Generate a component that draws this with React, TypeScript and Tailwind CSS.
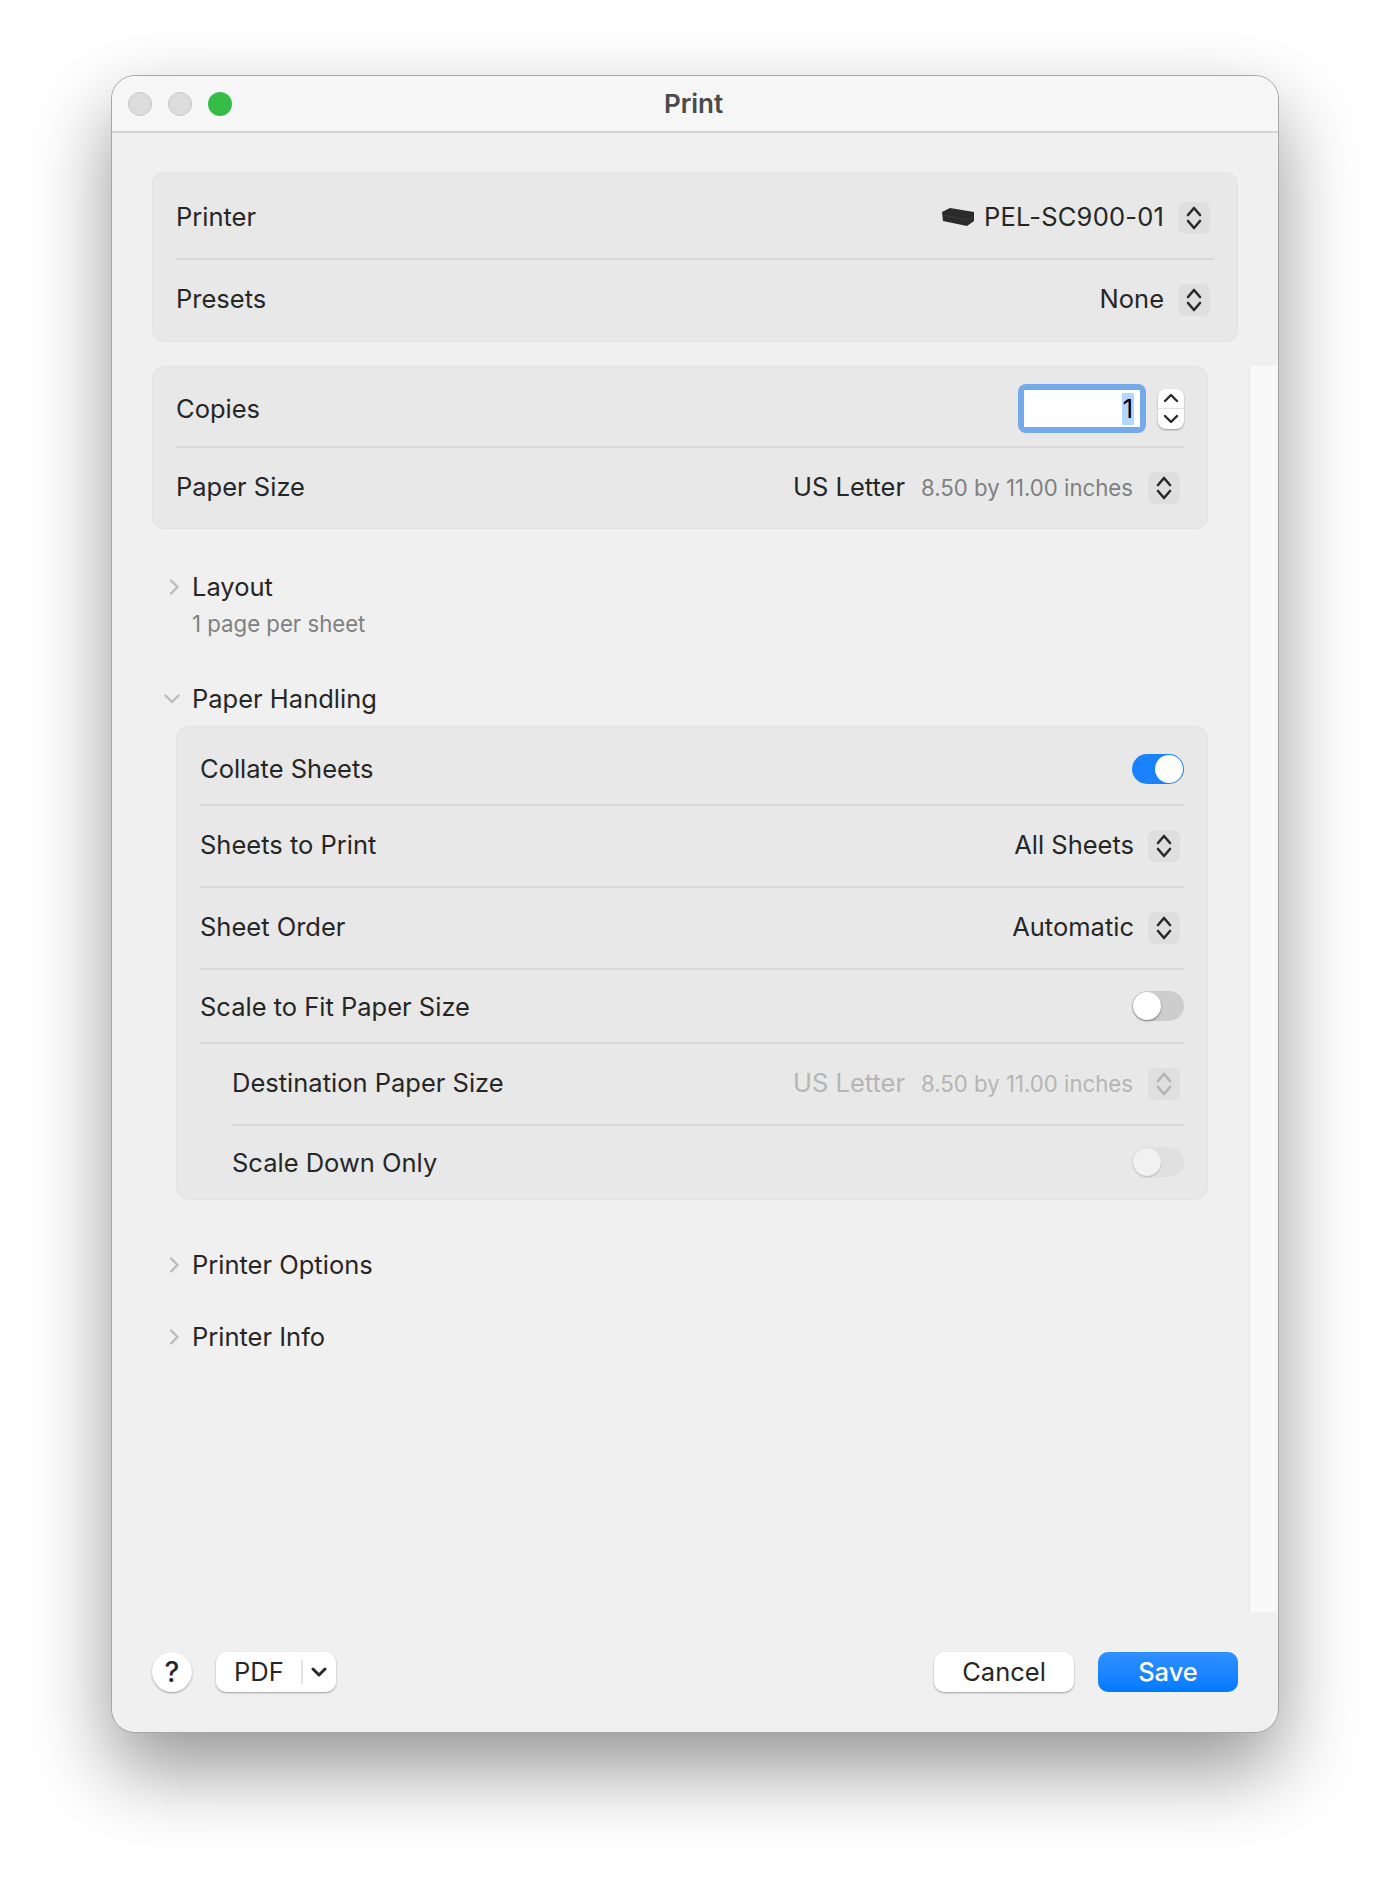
import React from 'react';

const Updown = ({ dim = false }: { dim?: boolean }) => (
  <div className="w-8 h-8 rounded-[7px] bg-[#dfdfdf] flex items-center justify-center">
    <svg width="16" height="24" viewBox="0 0 16 24" fill="none" stroke={dim ? '#b4b4b4' : '#2a2a2a'} strokeWidth="2.6" strokeLinecap="round" strokeLinejoin="round">
      <path d="M2 9 L8 2 L14 9" />
      <path d="M2 15 L8 22 L14 15" />
    </svg>
  </div>
);

const Toggle = ({ state }: { state: 'on' | 'off' | 'disabled' }) => {
  if (state === 'on') {
    return (
      <div className="w-[52px] h-[30px] rounded-full bg-[#1a82fb] flex items-center justify-end pr-[1px]">
        <div className="w-7 h-7 rounded-full bg-white" />
      </div>
    );
  }
  return (
    <div className={`w-[52px] h-[30px] rounded-full flex items-center pl-[1px] ${state === 'off' ? 'bg-[#cdcdcd]' : 'bg-[#e0e0e0]'}`}>
      <div className={`w-7 h-7 rounded-full ${state === 'off' ? 'bg-white shadow-[0_1px_2px_rgba(0,0,0,0.45)]' : 'bg-[#f1f1f1] shadow-[0_1px_2px_rgba(0,0,0,0.2)]'}`} />
    </div>
  );
};

const Divider = ({ inset = false }: { inset?: boolean }) => (
  <div className={`h-[2px] bg-[#d8d8d8] ${inset ? 'ml-[55px] mr-[23px]' : 'mx-[23px]'}`} />
);

const Row = ({ label, height, children, indent = false, labelPad = '' }: { label: string; height: string; children?: React.ReactNode; indent?: boolean; labelPad?: string }) => (
  <div className={`flex items-center justify-between ${height} ${indent ? 'pl-[55px]' : 'pl-[23px]'}`}>
    <span className={labelPad}>{label}</span>
    {children}
  </div>
);

const Section = ({ label }: { label: string }) => (
  <div className="flex items-center h-[32px] ml-[17px]">
    <div className="w-[23px]">
      <svg width="10" height="16" viewBox="0 0 10 16" fill="none" stroke="#bcbcbc" strokeWidth="2.4" strokeLinecap="round" strokeLinejoin="round">
        <path d="M2 1.5 L8.5 8 L2 14.5" />
      </svg>
    </div>
    <span>{label}</span>
  </div>
);

const Printer = () => (
  <svg width="34" height="19" viewBox="0 0 34 19" className="mr-[9px]">
    <path d="M1 4 L9 0 L33 4 L33 13 L26 18 L2 13 Z" fill="#2b2b2b" />
    <path d="M2 7 L26 12 L33 8" stroke="#3d3d3d" strokeWidth="1" fill="none" />
  </svg>
);

export default function App() {
  return (
    <div className="w-[1390px] h-[1880px] bg-white pl-[111px] pt-[75px] overflow-hidden text-[25.5px] leading-[32px] text-[#262626] font-['Inter',sans-serif]">
      <div className="w-[1168px] h-[1658px] rounded-[24px] border border-[#a6a6a6] bg-[#f0f0f0] flex flex-col overflow-hidden shadow-[0_36px_80px_rgba(0,0,0,0.42)]">
        {/* title bar */}
        <div className="relative h-[57px] shrink-0 bg-[#f6f6f6] border-b-2 border-[#d4d4d4] flex items-center justify-center pr-[3px]">
          <div className="absolute left-[16px] top-[16px] flex gap-4">
            <div className="w-6 h-6 rounded-full bg-[#dcdcdc] border border-[#c6c6c6]" />
            <div className="w-6 h-6 rounded-full bg-[#dcdcdc] border border-[#c6c6c6]" />
            <div className="w-6 h-6 rounded-full bg-[#35bd47]" />
          </div>
          <span className="font-semibold text-[26px] text-[#4b4b4b]">Print</span>
        </div>

        <div className="flex-1 flex flex-col pt-[39px]">
          {/* printer card */}
          <div className="ml-[40px] w-[1086px] h-[170px] rounded-[12px] bg-[#e8e8e8] border border-[#e2e2e2] shrink-0">
            <Row label="Printer" height="h-[85px] pt-[4px]" labelPad="pb-[2px]">
              <div className="flex items-center pr-[27px]">
                <Printer />
                <span className="pb-[2px] tracking-[0.2px]">PEL-SC900-01</span>
                <div className="ml-[14px]"><Updown /></div>
              </div>
            </Row>
            <Divider />
            <Row label="Presets" height="h-[81px] pb-[2px]" labelPad="pb-[2px]">
              <div className="flex items-center pr-[27px]">
                <span className="pb-[2px]">None</span>
                <div className="ml-[14px]"><Updown /></div>
              </div>
            </Row>
          </div>

          <div className="flex flex-1 mt-[24px]">
            <div className="ml-[40px] w-[1056px] shrink-0">
              {/* copies card */}
              <div className="h-[163px] rounded-[12px] bg-[#e8e8e8] border border-[#e2e2e2]">
                <Row label="Copies" height="h-[79px] pt-[4px]">
                  <div className="flex items-center pr-[23px]">
                    <div className="w-[128px] h-[49px] rounded-[8px] bg-[#74a9ea] p-[6px]">
                      <div className="h-full bg-white flex items-center justify-end pr-[6px]">
                        <span className="bg-[#b3d7ff] text-black px-[1px]">1</span>
                      </div>
                    </div>
                    <div className="ml-3 w-[26px] h-10 rounded-[8px] bg-white shadow-[0_1px_2px_rgba(0,0,0,0.35)] flex flex-col">
                      <div className="h-[20px] flex items-center justify-center border-b border-[#e2e2e2]">
                        <svg width="16" height="10" viewBox="0 0 16 10" fill="none" stroke="#2a2a2a" strokeWidth="2.4" strokeLinecap="round" strokeLinejoin="round"><path d="M2 8 L8 2 L14 8" /></svg>
                      </div>
                      <div className="h-[20px] flex items-center justify-center">
                        <svg width="16" height="10" viewBox="0 0 16 10" fill="none" stroke="#2a2a2a" strokeWidth="2.4" strokeLinecap="round" strokeLinejoin="round"><path d="M2 2 L8 8 L14 2" /></svg>
                      </div>
                    </div>
                  </div>
                </Row>
                <Divider />
                <Row label="Paper Size" height="h-[80px]" labelPad="pb-[2px]">
                  <div className="flex items-center pr-[27px]">
                    <span className="pb-[2px]">US Letter</span>
                    <span className="ml-[16px] text-[22.2px] text-[#808080]">8.50 by 11.00 inches</span>
                    <div className="ml-[15px]"><Updown /></div>
                  </div>
                </Row>
              </div>

              <div className="mt-[42px]">
                <Section label="Layout" />
                <div className="ml-[40px] mt-[5px] text-[22.2px] text-[#808080]">1 page per sheet</div>
              </div>

              <div className="mt-[43px] flex items-center h-[32px] ml-[12px]">
                <div className="w-[28px]">
                  <svg width="16" height="10" viewBox="0 0 16 10" fill="none" stroke="#bcbcbc" strokeWidth="2.4" strokeLinecap="round" strokeLinejoin="round">
                    <path d="M1.5 1.5 L8 8 L14.5 1.5" />
                  </svg>
                </div>
                <span>Paper Handling</span>
              </div>

              {/* paper handling card */}
              <div className="mt-[11px] ml-6 w-[1032px] h-[474px] rounded-[12px] bg-[#e8e8e8] border border-[#e2e2e2]">
                <Row label="Collate Sheets" height="h-[77px] pt-[6px]">
                  <div className="pr-[23px]"><Toggle state="on" /></div>
                </Row>
                <Divider />
                <Row label="Sheets to Print" height="h-[80px]" labelPad="pb-[2px]">
                  <div className="flex items-center pr-[27px]">
                    <span className="pb-[2px]">All Sheets</span>
                    <div className="ml-[14px]"><Updown /></div>
                  </div>
                </Row>
                <Divider />
                <Row label="Sheet Order" height="h-[80px]" labelPad="pb-[2px]">
                  <div className="flex items-center pr-[27px]">
                    <span className="pb-[2px]">Automatic</span>
                    <div className="ml-[14px]"><Updown /></div>
                  </div>
                </Row>
                <Divider />
                <Row label="Scale to Fit Paper Size" height="h-[72px]" labelPad="pt-[2px]">
                  <div className="pr-[23px]"><Toggle state="off" /></div>
                </Row>
                <Divider />
                <Row label="Destination Paper Size" height="h-[80px]" indent labelPad="pb-[2px]">
                  <div className="flex items-center pr-[27px]">
                    <span className="pb-[2px] text-[#b5b5b5]">US Letter</span>
                    <span className="ml-[16px] text-[22.2px] text-[#b5b5b5]">8.50 by 11.00 inches</span>
                    <div className="ml-[15px]"><Updown dim /></div>
                  </div>
                </Row>
                <Divider inset />
                <Row label="Scale Down Only" height="h-[72px]" indent labelPad="pt-[2px]">
                  <div className="pr-[23px]"><Toggle state="disabled" /></div>
                </Row>
              </div>

              <div className="mt-[49px]"><Section label="Printer Options" /></div>
              <div className="mt-[40px]"><Section label="Printer Info" /></div>
            </div>
            {/* scroller track */}
            <div className="ml-[41px] w-[28px] bg-[#f9f9f9] border-l border-[#e6e6e6]" />
          </div>

          {/* footer */}
          <div className="h-[120px] shrink-0 pt-[40px] pl-[40px] flex">
            <div className="w-10 h-10 rounded-full bg-white shadow-[0_1px_2px_rgba(0,0,0,0.35)] flex items-center justify-center text-[28px] font-medium">?</div>
            <div className="ml-6 w-[120px] h-10 rounded-[10px] bg-white shadow-[0_1px_2px_rgba(0,0,0,0.35)] flex items-center">
              <span className="ml-[18px] w-[67px]">PDF</span>
              <div className="w-[2px] h-6 bg-[#e2e2e2]" />
              <svg width="16" height="10" viewBox="0 0 16 10" fill="none" stroke="#2a2a2a" strokeWidth="3" strokeLinecap="round" strokeLinejoin="round" className="ml-2"><path d="M2 2 L8 8 L14 2" /></svg>
            </div>
            <div className="ml-[598px] w-[140px] h-10 rounded-[10px] bg-white shadow-[0_1px_2px_rgba(0,0,0,0.35)] flex items-center justify-center">Cancel</div>
            <div className="ml-6 w-[140px] h-10 rounded-[10px] bg-linear-to-b from-[#2f90ff] to-[#007aff] text-white font-medium flex items-center justify-center">Save</div>
          </div>
        </div>
      </div>
    </div>
  );
}
